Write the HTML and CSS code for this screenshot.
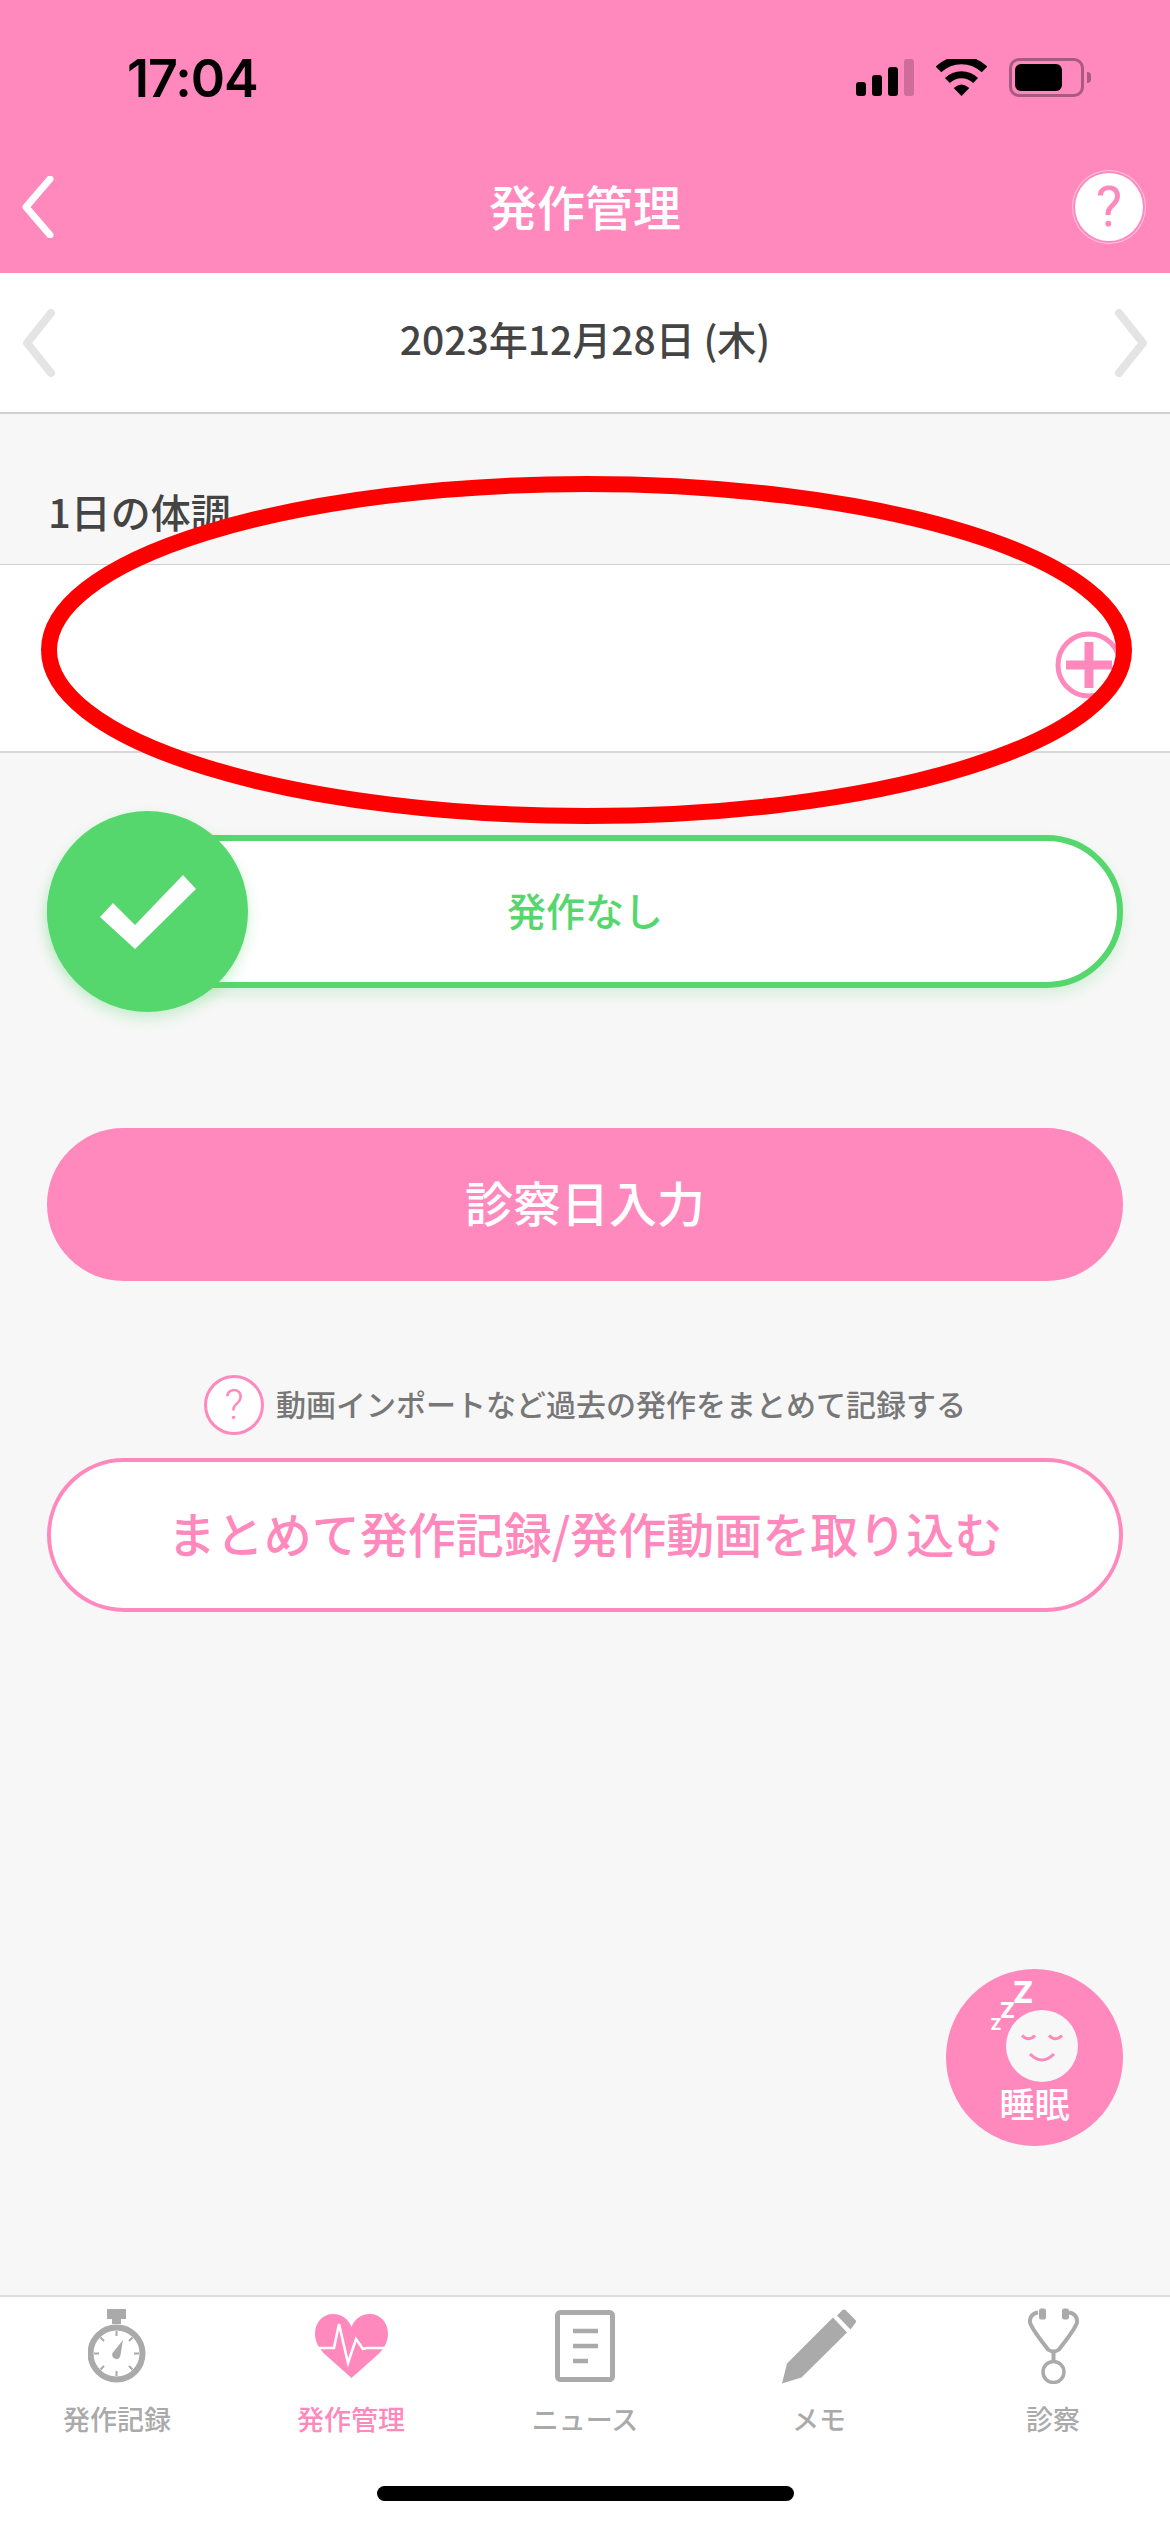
FILE: index.html
```html
<!DOCTYPE html>
<html lang="ja">
<head>
<meta charset="utf-8">
<title>発作管理</title>
<link rel="stylesheet" href="styles.css">
</head>
<body>
<div class="screen">
  <header class="header">
    <div class="status">
      <span class="time">17:04</span>
      <div class="status-icons">
        <div class="signal">
          <i class="bar b1"></i><i class="bar b2"></i><i class="bar b3"></i><i class="bar b4"></i>
        </div>
        <svg class="wifi" width="51" height="37" viewBox="0 0 51 37">
          <path d="M25.5 37L17.7 29Q25.5 22 33.3 29Z" fill="#000"/>
          <path d="M11.4 21.6A20 20 0 0 1 39.6 21.6" fill="none" stroke="#000" stroke-width="7"/>
          <path d="M2.5 10.5A33 33 0 0 1 48.5 10.5" fill="none" stroke="#000" stroke-width="8"/>
        </svg>
        <div class="battery"><div class="battery-body"><i class="battery-fill"></i></div><i class="battery-nub"></i></div>
      </div>
    </div>
    <div class="nav">
      <svg class="chev" width="32" height="62" viewBox="0 0 32 62"><path d="M28 3L4 31L28 59" fill="none" stroke="#fff" stroke-width="7" stroke-linecap="round" stroke-linejoin="round"/></svg>
      <h1 class="title">発作管理</h1>
      <span class="nav-help">?</span>
    </div>
  </header>

  <div class="date-row">
    <svg class="chev" width="34" height="68" viewBox="0 0 34 68"><path d="M29 4L5 34L29 64" fill="none" stroke="#e4e4e4" stroke-width="8" stroke-linecap="round" stroke-linejoin="round"/></svg>
    <span class="date">2023年12月28日 (木)</span>
    <svg class="chev chev-right" width="34" height="68" viewBox="0 0 34 68"><path d="M5 4L29 34L5 64" fill="none" stroke="#e4e4e4" stroke-width="8" stroke-linecap="round" stroke-linejoin="round"/></svg>
  </div>

  <div class="section-label"><span>1日の体調</span></div>
  <div class="condition-row">
    <svg width="68" height="68" viewBox="0 0 68 68"><circle cx="34" cy="34" r="31" fill="none" stroke="#ff88bd" stroke-width="5"/><path d="M34 11V57M11 34H57" stroke="#ff88bd" stroke-width="9"/></svg>
  </div>

  <div class="toggle">
    <div class="toggle-pill"><span class="toggle-text">発作なし</span></div>
    <div class="toggle-knob">
      <svg width="96" height="74" viewBox="0 0 96 74"><path d="M0 42L13 28L35 50L83 0L96 14L35 74Z" fill="#fff"/></svg>
    </div>
  </div>

  <div class="btn-solid">診察日入力</div>

  <div class="help-row">
    <span class="help-icon">?</span>
    <span class="help-text">動画インポートなど過去の発作をまとめて記録する</span>
  </div>

  <div class="btn-outline">まとめて発作記録/発作動画を取り込む</div>

  <div class="spacer"></div>

  <nav class="tabbar">
    <div class="tabs">
      <div class="tab">
        <svg class="tab-icon" width="58" height="74" viewBox="0 0 58 74">
          <rect x="19" y="0" width="19" height="10" fill="#aaa"/><rect x="24" y="10" width="9" height="5" fill="#aaa"/>
          <circle cx="28.5" cy="44.5" r="26" fill="#fff" stroke="#aaa" stroke-width="6"/>
          <path d="M28.5 22V27M28.5 62V67M6 44.5H11M46 44.5H51M12.5 28.5L16 32M41 57L44.5 60.500M44.500 28.500L41 32M16 57L12.500 60.500" stroke="#aaa" stroke-width="2"/>
          <path d="M35 31L32.500 46A4.200 4.200 0 1 1 24.500 44Z" fill="#aaa"/>
        </svg>
        <span class="tab-label">発作記録</span>
      </div>
      <div class="tab active">
        <svg class="tab-icon" width="73" height="64" viewBox="0 0 73 64">
          <path d="M36.500 13C33 4 26 0 18 0C8 0 0 8 0 20C0 27 3 33 9 39.500L36.500 64L64 39.500C70 33 73 27 73 20C73 8 65 0 55 0C47 0 40 4 36.500 13Z" fill="#ff88bd"/>
          <path d="M4 34H19L24 10L33 49L41 25L48 35L52 34H69" fill="none" stroke="#fff" stroke-width="2.600"/>
        </svg>
        <span class="tab-label">発作管理</span>
      </div>
      <div class="tab">
        <svg class="tab-icon" width="60" height="72" viewBox="0 0 60 72">
          <rect x="2.500" y="2.500" width="55" height="67" rx="3" fill="none" stroke="#aaa" stroke-width="5"/>
          <path d="M18 21H43M18 36H43M18 51H33" stroke="#aaa" stroke-width="4.500"/>
        </svg>
        <span class="tab-label">ニュース</span>
      </div>
      <div class="tab">
        <svg class="tab-icon" width="75" height="75" viewBox="0 0 75 75">
          <path d="M0 75L5 55L51 9L65 24L19.500 69Z" fill="#aaa"/>
          <path d="M60 2Q62 0 64 2L73 11Q75 13 73 15L68.500 21L55 7Z" fill="#aaa"/>
        </svg>
        <span class="tab-label">メモ</span>
      </div>
      <div class="tab">
        <svg class="tab-icon" width="51" height="75" viewBox="0 0 51 75">
          <rect x="11" y="0" width="7" height="11" rx="2" fill="#aaa"/><rect x="34" y="0" width="7" height="11" rx="2" fill="#aaa"/>
          <path d="M10 4C4 5 1.500 9 2 14C4 21 14 33 20 41Q25.500 45 31 41C37 33 47 21 49 14C49.500 9 47 5 41 4" fill="none" stroke="#aaa" stroke-width="4"/>
          <path d="M25.500 44V53" stroke="#aaa" stroke-width="4"/>
          <circle cx="25.500" cy="63.500" r="10.500" fill="none" stroke="#aaa" stroke-width="3.500"/>
        </svg>
        <span class="tab-label">診察</span>
      </div>
    </div>
    <div class="home-bar"></div>
  </nav>

  <div class="sleep">
    <svg class="sleep-art" width="177" height="115" viewBox="0 0 177 115">
      <text class="z z1" x="67" y="34">Z</text>
      <text class="z z2" x="54" y="49">Z</text>
      <text class="z z3" x="44.500" y="61">Z</text>
      <circle cx="96" cy="77" r="36" fill="#f7f7f7"/>
      <path d="M76 66.500Q82.500 73 89 66.500M103 66.500Q109.500 73 116 66.500M84 85Q96 97 108 85" fill="none" stroke="#ff88bd" stroke-width="3"/>
    </svg>
    <span class="sleep-label">睡眠</span>
  </div>

  <svg class="annotation" width="1170" height="380" viewBox="0 0 1170 380">
    <ellipse cx="586.500" cy="190" rx="537.500" ry="166" fill="none" stroke="#ff0000" stroke-width="16"/>
  </svg>
</div>
</body>
</html>
```
FILE: styles.css
```css
* { box-sizing: border-box; }
html, body { margin: 0; padding: 0; }
body { font-family: "Noto Sans CJK JP", "Noto Sans", sans-serif; background: #f7f7f7; }
.screen { position: relative; width: 1170px; height: 2532px; display: flex; flex-direction: column; overflow: hidden; background: #f7f7f7; color: #444; }

.header { height: 273px; background: #ff88bd; flex: none; }
.status { height: 157px; display: flex; justify-content: space-between; padding: 59px 79px 0 127px; }
.time { font-family: Inter, Roboto, sans-serif; font-weight: 600; font-size: 52px; line-height: 40px; color: #000; letter-spacing: -1px; }
.status-icons { display: flex; align-items: flex-start; height: 40px; }
.signal { display: flex; align-items: flex-end; gap: 6px; height: 37px; }
.bar { display: block; width: 10px; background: #000; border-radius: 3px; }
.b1 { height: 14px; }
.b2 { height: 21px; }
.b3 { height: 29px; }
.b4 { height: 37px; background: #cf6d9a; }
.wifi { margin-left: 22px; }
.battery { display: flex; align-items: center; margin: -1px 0 0 22px; height: 39px; }
.battery-body { width: 75px; height: 39px; border: 3px solid #a85a80; border-radius: 10px; padding: 3px; }
.battery-fill { display: block; width: 47px; height: 27px; background: #000; border-radius: 6px; }
.battery-nub { display: block; width: 4px; height: 11px; margin-left: 3px; background: #a85a80; border-radius: 0 6px 6px 0; }

.nav { display: grid; grid-template-columns: 1fr auto 1fr; align-items: center; padding: 0 22px; height: 100px; }
.title { margin: 0 0 4px; font-size: 48px; font-weight: 500; color: #fff; line-height: 60px; }
.nav-help { justify-self: end; margin-right: 5px; width: 68px; height: 68px; border-radius: 50%; background: #fff; box-shadow: 0 0 0 2px #ff88bd, 0 0 0 3px #ffc4de; color: #ff88bd; display: flex; align-items: center; justify-content: center; font-family: Roboto, sans-serif; font-weight: 400; font-size: 56px; line-height: 68px; }

.date-row { flex: none; height: 141px; background: #fff; border-bottom: 2px solid #d0d0d0; display: flex; align-items: center; justify-content: space-between; padding: 0 22px; }
.date { font-size: 39px; font-weight: 500; color: #444; line-height: 60px; margin-bottom: 10px; }

.section-label { flex: none; height: 150px; padding: 0 48px 29px; display: flex; align-items: flex-end; font-size: 40px; font-weight: 500; line-height: 48px; color: #444; }
.condition-row { flex: none; height: 189px; background: #fff; border-top: 1px solid #d0d0d0; border-bottom: 2px solid #d8d8d8; display: flex; align-items: center; justify-content: flex-end; padding: 14px 47px 0 0; }

.toggle { flex: none; position: relative; height: 201px; margin: 58px 47px 0; display: flex; align-items: center; }
.toggle-pill { width: 100%; height: 153px; border: 6px solid #55d76d; border-radius: 77px; background: #fff; display: flex; align-items: center; justify-content: center; color: #55d76d; font-size: 39px; font-weight: 500; box-shadow: 0 6px 14px rgba(85, 215, 109, .22); }
.toggle-text { margin-bottom: 6px; }
.toggle-knob { position: absolute; left: 0; top: 0; width: 201px; height: 201px; border-radius: 50%; background: #55d76d; display: flex; align-items: center; justify-content: center; box-shadow: 0 6px 14px rgba(85, 215, 109, .3); }

.btn-solid { flex: none; height: 153px; margin: 116px 47px 0; padding-bottom: 8px; border-radius: 77px; background: #ff88bd; color: #fff; display: flex; align-items: center; justify-content: center; font-size: 48px; font-weight: 500; }

.help-row { flex: none; margin-top: 94px; height: 60px; display: flex; align-items: center; justify-content: center; gap: 12px; }
.help-icon { width: 60px; height: 60px; border: 3px solid #ff88bd; border-radius: 50%; background: #fff; color: #ff88bd; display: flex; align-items: center; justify-content: center; font-family: Roboto, sans-serif; font-weight: 300; font-size: 42px; line-height: 54px; }
.help-text { font-size: 30px; font-weight: 500; color: #777; line-height: 44px; margin-bottom: 4px; }

.btn-outline { flex: none; height: 154px; margin: 23px 47px 0; padding-bottom: 6px; border: 4px solid #ff88bd; border-radius: 77px; background: #fff; color: #ff88bd; display: flex; align-items: center; justify-content: center; font-size: 48px; font-weight: 500; }

.spacer { flex: 1; }

.tabbar { flex: none; height: 237px; background: #fff; border-top: 2px solid #ddd; display: flex; flex-direction: column; align-items: center; padding-top: 11px; }
.tabs { width: 100%; display: grid; grid-template-columns: repeat(5, 234px); }
.tab { display: flex; flex-direction: column; align-items: center; color: #aaa; }
.tab.active { color: #ff88bd; }
.tab-icon { height: 76px; flex: none; }
.tab-label { font-size: 27px; font-weight: 500; line-height: 36px; margin-top: 17px; }
.home-bar { width: 417px; height: 15px; background: #000; border-radius: 8px; margin-top: 49px; }

.sleep { position: absolute; left: 946px; top: 1969px; width: 177px; height: 177px; border-radius: 50%; background: #ff88bd; display: flex; flex-direction: column; align-items: center; }
.sleep-art { flex: none; }
.sleep-label { color: #fff; font-size: 35px; font-weight: 500; line-height: 42px; margin-top: -2px; }
.z { font-family: Inter, sans-serif; font-weight: 800; fill: #fff; }
.z1 { font-size: 30px; }
.z2 { font-size: 22px; }
.z3 { font-size: 16px; }

.annotation { position: absolute; left: 0; top: 460px; pointer-events: none; }
```
